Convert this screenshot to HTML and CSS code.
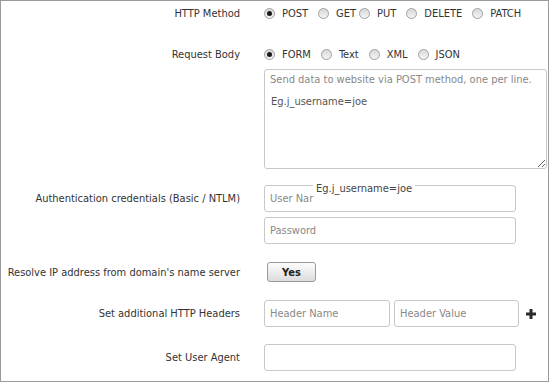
FILE: index.html
```html
<!DOCTYPE html>
<html>
<head>
<meta charset="utf-8">
<link rel="stylesheet" href="styles.css">
</head>
<body>
<div class="panel">
  <div class="row row-method">
    <div class="label h18">HTTP Method</div>
    <div class="radios">
      <label class="opt"><span class="radio on"></span>POST</label>
      <label class="opt tight"><span class="radio"></span>GET</label>
      <label class="opt"><span class="radio"></span>PUT</label>
      <label class="opt"><span class="radio"></span>DELETE</label>
      <label class="opt"><span class="radio"></span>PATCH</label>
    </div>
  </div>
  <div class="row row-body">
    <div class="label h18">Request Body</div>
    <div class="ctrl">
      <div class="radios">
        <label class="opt"><span class="radio on"></span>FORM</label>
        <label class="opt"><span class="radio"></span>Text</label>
        <label class="opt"><span class="radio"></span>XML</label>
        <label class="opt"><span class="radio"></span>JSON</label>
      </div>
      <div class="ta-wrap">
        <textarea class="ta" placeholder="Send data to website via POST method, one per line."></textarea>
        <span class="ta-hint">Eg.j_username=joe</span>
      </div>
    </div>
  </div>
  <div class="row row-auth">
    <div class="label h26">Authentication credentials (Basic / NTLM)</div>
    <div class="ctrl stack">
      <div class="in-wrap">
        <input class="inp wide" type="text" placeholder="User Nar">
        <span class="float-hint">Eg.j_username=joe</span>
      </div>
      <input class="inp wide" type="password" placeholder="Password">
    </div>
  </div>
  <div class="row row-resolve">
    <div class="label h20">Resolve IP address from domain's name server</div>
    <div class="ctrl"><button class="btn">Yes</button></div>
  </div>
  <div class="row row-headers">
    <div class="label h26">Set additional HTTP Headers</div>
    <div class="ctrl hdrs">
      <input class="inp hn" type="text" placeholder="Header Name">
      <input class="inp hv" type="text" placeholder="Header Value">
      <svg class="plus" width="10" height="10" viewBox="0 0 10 10"><path d="M3.5 0h3v3.5H10v3H6.5V10h-3V6.5H0v-3h3.5z" fill="#2b2b2b"/></svg>
    </div>
  </div>
  <div class="row row-agent">
    <div class="label h26">Set User Agent</div>
    <div class="ctrl"><input class="inp wide" type="text"></div>
  </div>
</div>
</body>
</html>
```
FILE: styles.css
```css
* { box-sizing: border-box; }
html, body { margin: 0; padding: 0; background: #fff; }
body {
  font-family: "DejaVu Sans Condensed", "DejaVu Sans", sans-serif;
  font-size: 11px;
  color: #333;
}
.panel {
  width: 549px;
  height: 382px;
  border: 1px solid #9a9a9a;
  padding-top: 3px;
}
.row {
  display: grid;
  grid-template-columns: 239px 1fr;
  column-gap: 24px;
  align-items: start;
}
.label {
  display: flex;
  align-items: center;
  justify-content: flex-end;
  white-space: nowrap;
}
.h18 { height: 18px; }
.h20 { height: 20px; }
.h26 { height: 26px; }
.radios {
  display: flex;
  align-items: center;
  height: 18px;
}
.opt {
  display: flex;
  align-items: center;
  margin-right: 10px;
}
.opt.tight { margin-right: 3px; }
.radio {
  width: 11px;
  height: 11px;
  border-radius: 50%;
  border: 1px solid #a0a0a0;
  background: linear-gradient(#d8d8d8, #f4f4f4);
  margin-right: 7px;
  position: relative;
  flex: none;
}
.radio.on::after {
  content: "";
  position: absolute;
  left: 2px; top: 2px;
  width: 5px; height: 5px;
  border-radius: 50%;
  background: #1a1a1a;
}
.row-body { margin-top: 23px; }
.ta-wrap { position: relative; margin-top: 6px; }
.ta {
  display: block;
  width: 283px;
  height: 100px;
  border: 1px solid #c8c8c8;
  border-radius: 3px;
  font-family: inherit;
  font-size: 11px;
  padding: 3px 5px;
  resize: both;
  color: #555;
}
.ta::placeholder { color: #888; }
.ta-hint {
  position: absolute;
  left: 7px;
  top: 26px;
  color: #555;
}
.row-auth { margin-top: 16px; }
.stack { display: flex; flex-direction: column; gap: 5px; }
.in-wrap { position: relative; }
.inp {
  display: block;
  height: 27px;
  border: 1px solid #c8c8c8;
  border-radius: 3px;
  font-family: inherit;
  font-size: 11px;
  padding: 0 5px;
  color: #333;
  background: #fff;
}
.inp::placeholder { color: #888; }
.wide { width: 252px; }
.float-hint {
  position: absolute;
  left: 49px;
  top: -2px;
  background: #fff;
  padding: 0 3px;
  line-height: 12px;
  color: #444;
}
.row-resolve { margin-top: 18px; }
.btn {
  margin-left: 3px;
  width: 49px;
  height: 20px;
  border: 1px solid #9a9a9a;
  border-radius: 3px;
  background: linear-gradient(#fdfdfd, #dcdcdc);
  font-family: inherit;
  font-size: 11px;
  font-weight: bold;
  color: #222;
  padding: 0;
}
.row-headers { margin-top: 18px; }
.hdrs { display: flex; align-items: center; }
.hn { width: 126px; margin-right: 4px; }
.hv { width: 125px; margin-right: 7px; }
.plus { display: block; }
.row-agent { margin-top: 17px; }
```
